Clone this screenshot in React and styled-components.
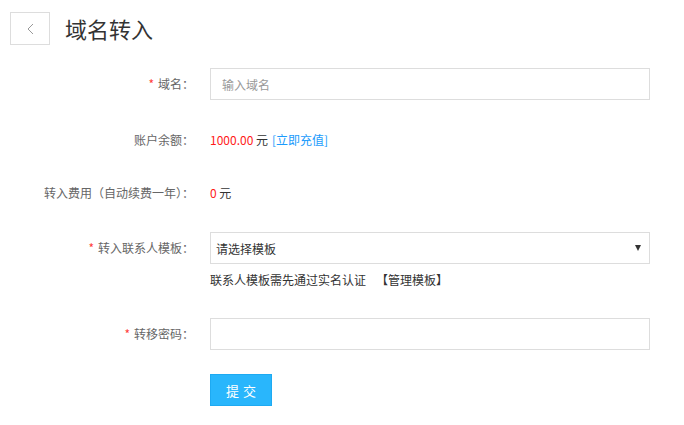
import React from 'react'
import styled, { createGlobalStyle } from 'styled-components'

const GlobalStyle = createGlobalStyle`
  html, body {
    margin: 0;
    padding: 0;
    background: #fff;
    font-family: "Noto Sans CJK SC", "Noto Sans", sans-serif;
  }
`

const Page = styled.div`
  width: 684px;
  height: 425px;
  padding: 12px 0 0 10px;
  box-sizing: border-box;
`

const Header = styled.div`
  display: flex;
  align-items: center;
  height: 33px;
`

const BackButton = styled.button`
  width: 40px;
  height: 33px;
  border: 1px solid #ddd;
  background: #fff;
  display: flex;
  align-items: center;
  justify-content: center;
  padding: 0;
  cursor: pointer;
`

const Title = styled.h1`
  margin: 0 0 0 15px;
  font-size: 22px;
  font-weight: normal;
  color: #333;
  line-height: 33px;
`

const Form = styled.div`
  display: flex;
  flex-direction: column;
  margin-left: -10px;
`

const Row = styled.div`
  display: flex;
  align-items: flex-start;
  margin-top: ${p => p.$top}px;
`

const Label = styled.div`
  width: 194px;
  flex-shrink: 0;
  text-align: right;
  font-size: 12px;
  color: #666;
  line-height: ${p => (p.$tall ? 32 : 16)}px;
`

const Star = styled.span`
  color: #ff3b3b;
  margin-right: 4px;
`

const Control = styled.div`
  margin-left: 16px;
  display: flex;
  flex-direction: column;
`

const Input = styled.input`
  width: 440px;
  height: 32px;
  box-sizing: border-box;
  border: 1px solid #ddd;
  padding: 0 11px;
  font-size: 12px;
  font-family: inherit;
  color: #333;
  outline: none;

  &::placeholder {
    color: #999;
  }
`

const Select = styled.div`
  width: 440px;
  height: 32px;
  box-sizing: border-box;
  border: 1px solid #ddd;
  padding: 0 8px 0 5px;
  display: flex;
  align-items: center;
  justify-content: space-between;
  font-size: 12px;
  color: #333;
`

const Caret = styled.span`
  width: 0;
  height: 0;
  border-left: 3px solid transparent;
  border-right: 3px solid transparent;
  border-top: 6px solid #333;
`

const Text = styled.div`
  font-size: 12px;
  line-height: 16px;
  color: #333;
`

const Red = styled.span`
  color: #ff1a1a;
`

const Link = styled.a`
  color: #1a9bfc;
  text-decoration: none;
  margin-left: 4px;
`

const Help = styled.div`
  margin-top: 8px;
  font-size: 12px;
  line-height: 16px;
  color: #333;
`

const Manage = styled.a`
  color: #333;
  text-decoration: none;
  margin-left: 10px;
`

const Submit = styled.button`
  width: 62px;
  height: 32px;
  background: #29b6fc;
  border: 1px solid #1eaaf2;
  color: #fff;
  font-size: 13px;
  font-family: inherit;
  letter-spacing: 4px;
  padding: 0 0 0 4px;
  cursor: pointer;
`

export default function App() {
  return (
    <Page>
      <GlobalStyle />
      <Header>
        <BackButton>
          <svg width="7" height="12" viewBox="0 0 7 12">
            <path d="M6 1 L1 6 L6 11" fill="none" stroke="#999" strokeWidth="1" />
          </svg>
        </BackButton>
        <Title>域名转入</Title>
      </Header>
      <Form>
        <Row $top={23}>
          <Label $tall><Star>*</Star>域名：</Label>
          <Control>
            <Input placeholder="输入域名" />
          </Control>
        </Row>
        <Row $top={32}>
          <Label>账户余额：</Label>
          <Control>
            <Text><Red>1000.00</Red> 元<Link>[立即充值]</Link></Text>
          </Control>
        </Row>
        <Row $top={37}>
          <Label>转入费用（自动续费一年）：</Label>
          <Control>
            <Text><Red>0</Red> 元</Text>
          </Control>
        </Row>
        <Row $top={31}>
          <Label $tall><Star>*</Star>转入联系人模板：</Label>
          <Control>
            <Select>
              <span>请选择模板</span>
              <Caret />
            </Select>
            <Help>联系人模板需先通过实名认证<Manage>【管理模板】</Manage></Help>
          </Control>
        </Row>
        <Row $top={30}>
          <Label $tall><Star>*</Star>转移密码：</Label>
          <Control>
            <Input />
          </Control>
        </Row>
        <Row $top={24}>
          <Label />
          <Control>
            <Submit>提交</Submit>
          </Control>
        </Row>
      </Form>
    </Page>
  )
}
